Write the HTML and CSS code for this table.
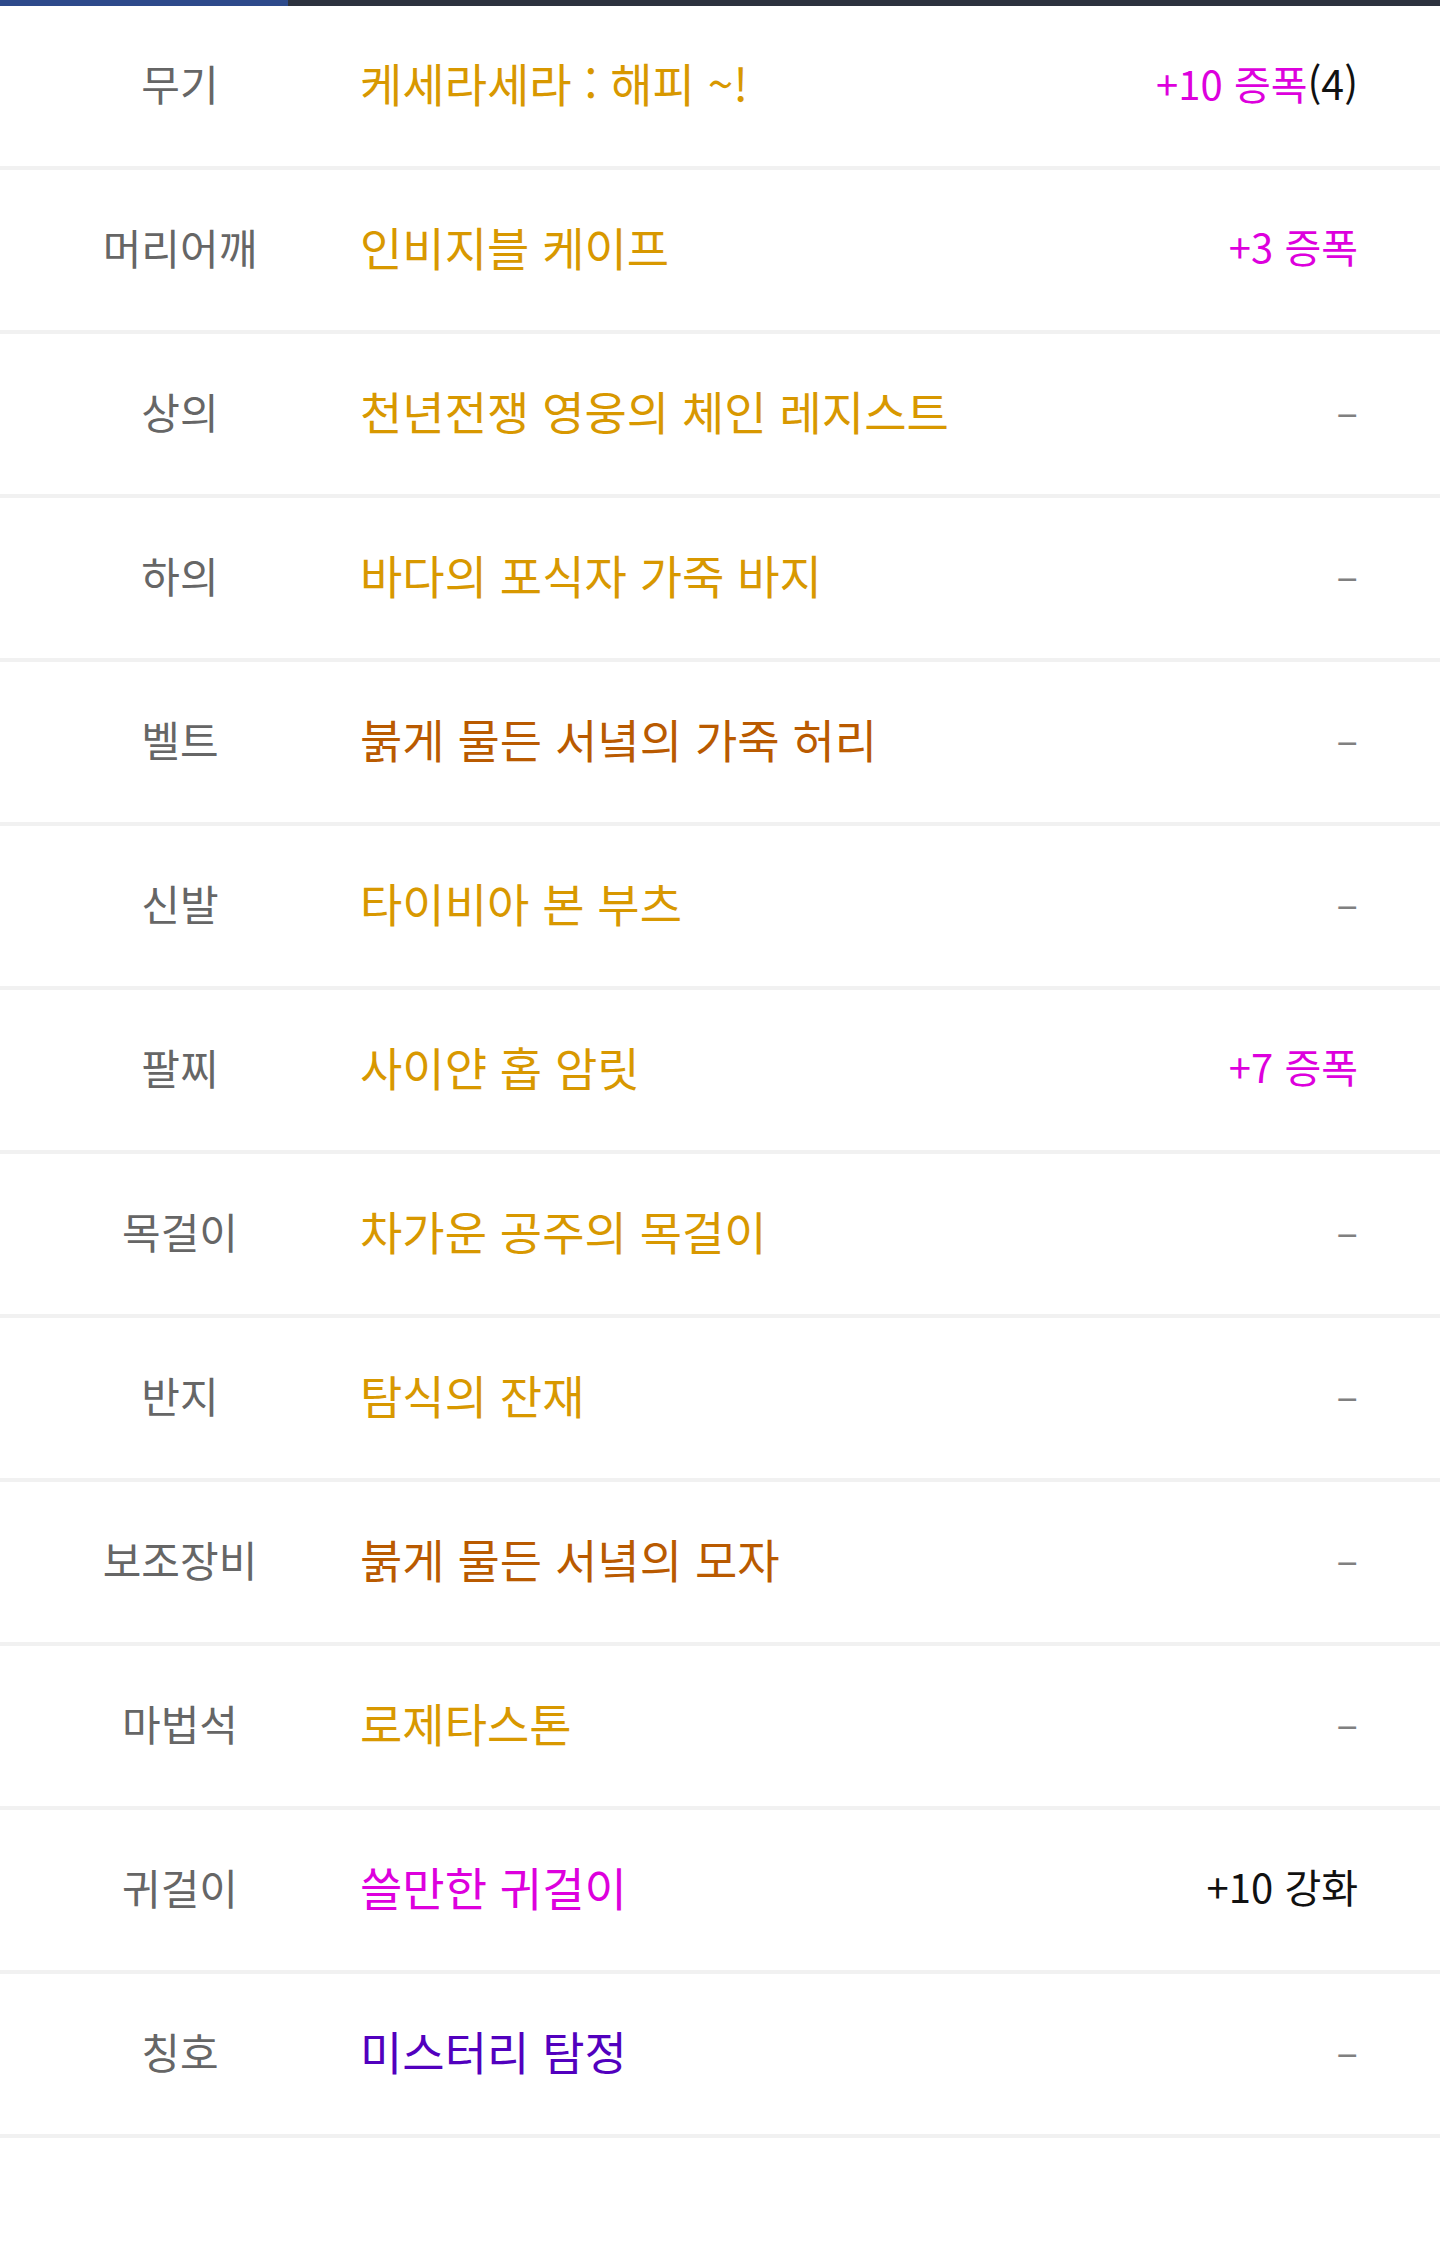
FILE: index.html
```html
<!DOCTYPE html>
<html lang="ko">
<head>
<meta charset="utf-8">
<title>장비</title>
<link rel="stylesheet" href="styles.css">
</head>
<body>
<div class="tabbar"><div class="tab-active"></div></div>
<ul class="equip">
  <li class="row"><span class="slot">무기</span><span class="name gold">케세라세라 : 해피 ~!</span><span class="val"><span class="amp">+10 증폭</span><span class="cnt">(4)</span></span></li>
  <li class="row"><span class="slot">머리어깨</span><span class="name gold">인비지블 케이프</span><span class="val"><span class="amp">+3 증폭</span></span></li>
  <li class="row"><span class="slot">상의</span><span class="name gold">천년전쟁 영웅의 체인 레지스트</span><span class="val dash">–</span></li>
  <li class="row"><span class="slot">하의</span><span class="name gold">바다의 포식자 가죽 바지</span><span class="val dash">–</span></li>
  <li class="row"><span class="slot">벨트</span><span class="name brown">붉게 물든 서녘의 가죽 허리</span><span class="val dash">–</span></li>
  <li class="row"><span class="slot">신발</span><span class="name gold">타이비아 본 부츠</span><span class="val dash">–</span></li>
  <li class="row"><span class="slot">팔찌</span><span class="name gold">사이얀 홉 암릿</span><span class="val"><span class="amp">+7 증폭</span></span></li>
  <li class="row"><span class="slot">목걸이</span><span class="name gold">차가운 공주의 목걸이</span><span class="val dash">–</span></li>
  <li class="row"><span class="slot">반지</span><span class="name gold">탐식의 잔재</span><span class="val dash">–</span></li>
  <li class="row"><span class="slot">보조장비</span><span class="name brown">붉게 물든 서녘의 모자</span><span class="val dash">–</span></li>
  <li class="row"><span class="slot">마법석</span><span class="name gold">로제타스톤</span><span class="val dash">–</span></li>
  <li class="row"><span class="slot">귀걸이</span><span class="name magenta">쓸만한 귀걸이</span><span class="val plain">+10 강화</span></li>
  <li class="row"><span class="slot">칭호</span><span class="name purple">미스터리 탐정</span><span class="val dash">–</span></li>
</ul>
</body>
</html>
```

FILE: styles.css
```css
html, body {
  margin: 0;
  padding: 0;
  background: #ffffff;
}
body {
  font-family: "Noto Sans CJK KR", "Noto Sans", sans-serif;
}
.tabbar {
  height: 6px;
  background: #2c323e;
}
.tab-active {
  width: 288px;
  height: 6px;
  background: #2d4a8b;
}
.equip {
  list-style: none;
  margin: 0;
  padding: 0;
}
.row {
  display: flex;
  align-items: center;
  height: 152px;
  padding-bottom: 8px;
  border-bottom: 4px solid #f1f1f1;
}
.slot {
  width: 360px;
  text-align: center;
  font-size: 42px;
  color: #666666;
}
.name {
  flex: 1;
  font-size: 46px;
}
.gold { color: #d89800; }
.brown { color: #b95a00; }
.magenta { color: #dd00dd; }
.purple { color: #5200be; }
.val {
  padding-right: 82px;
  font-size: 40px;
  white-space: nowrap;
}
.amp { color: #dd00dd; }
.cnt { color: #111111; font-size: 41px; }
.plain { color: #111111; }
.dash { color: #808080; }
```
